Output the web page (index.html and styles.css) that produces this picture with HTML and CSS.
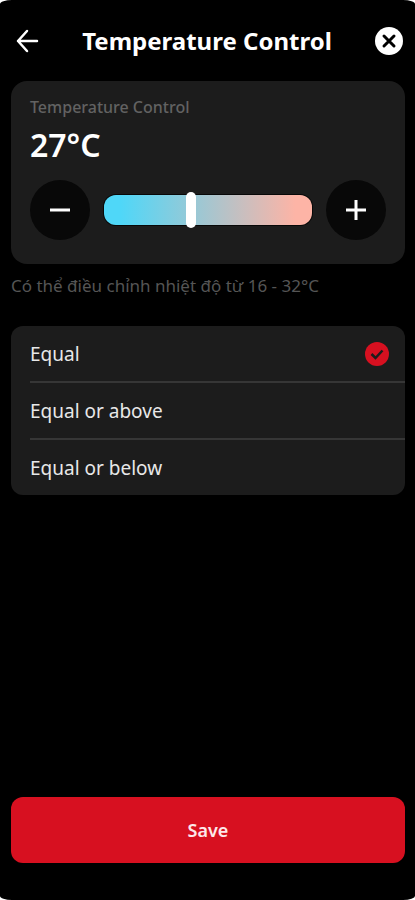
FILE: index.html
```html
<!DOCTYPE html>
<html lang="en">
    <head>
        <meta charset="utf-8">
        <meta name="viewport" content="width=device-width, initial-scale=1">
        <title>Temperature Control</title>
        <link rel="stylesheet" href="styles.css">
    </head>
    <body>
        <form class="screen">
            <header class="header">
                <button class="icon-btn" type="button" aria-label="Back">
                    <svg width="24" height="24" viewBox="0 0 24 24" fill="none" stroke="#fff" stroke-width="2.5" stroke-linecap="round" stroke-linejoin="round">
                        <path d="M22 12H3M12 2L3 12l9 10"/>
                    </svg>
                </button>
                <h1 class="title">Temperature Control</h1>
                <button class="icon-btn" type="button" aria-label="Close">
                    <svg width="28" height="28" viewBox="0 0 28 28">
                        <circle cx="14" cy="14" r="14" fill="#fff"/>
                        <path d="M9 9l10 10M19 9L9 19" stroke="#000" stroke-width="3" stroke-linecap="round"/>
                    </svg>
                </button>
            </header>
            <main class="content">
                <section class="card">
                    <label class="card-label" for="temp">Temperature Control</label>
                    <output class="value" for="temp">27°C</output>
                    <div class="controls">
                        <button class="round-btn" type="button" aria-label="Decrease">
                            <svg width="22" height="22" viewBox="0 0 22 22" stroke="#fff" stroke-width="3"><path d="M1 11h20"/></svg>
                        </button>
                        <input class="slider" id="temp" type="range" min="16" max="32" step="any" value="22.6">
                        <button class="round-btn" type="button" aria-label="Increase">
                            <svg width="22" height="22" viewBox="0 0 22 22" stroke="#fff" stroke-width="3"><path d="M1 11h20M11 1v20"/></svg>
                        </button>
                    </div>
                </section>
                <p class="hint" lang="vi">Có thể điều chỉnh nhiệt độ từ 16 - 32°C</p>
                <div class="options" role="radiogroup">
                    <label class="option">
                        <span>Equal</span>
                        <span class="mark">
                            <input type="radio" name="mode" checked>
                            <svg viewBox="0 0 24 24" fill="none" stroke="#1c1c1c" stroke-width="2.5"><path d="M6.500 12l4 4 7-7.500"/></svg>
                        </span>
                    </label>
                    <label class="option">
                        <span>Equal or above</span>
                        <span class="mark">
                            <input type="radio" name="mode">
                            <svg viewBox="0 0 24 24" fill="none" stroke="#1c1c1c" stroke-width="2.5"><path d="M6.500 12l4 4 7-7.500"/></svg>
                        </span>
                    </label>
                    <label class="option">
                        <span>Equal or below</span>
                        <span class="mark">
                            <input type="radio" name="mode">
                            <svg viewBox="0 0 24 24" fill="none" stroke="#1c1c1c" stroke-width="2.5"><path d="M6.500 12l4 4 7-7.500"/></svg>
                        </span>
                    </label>
                </div>
                <button class="save" type="submit">Save</button>
            </main>
        </form>
    </body>
</html>
```

FILE: styles.css
```css
*{
    box-sizing:border-box;
    margin:0;
    padding:0;
}
body{
    background:#fff;
    font-family:"Noto Sans","Open Sans",sans-serif;
    color:#fff;
}
button{
    border:0;
    background:none;
    font-family:inherit;
    color:inherit;
    cursor:pointer;
}
svg{
    display:block;
}
.screen{
    display:flex;
    flex-direction:column;
    min-height:100vh;
    background:#000;
    border-radius:12px / 4px;
}
.header{
    display:flex;
    align-items:center;
    justify-content:space-between;
    height:81px;
    padding:0 12px 0 15px;
}
.title{
    font-size:24px;
    line-height:32px;
    font-weight:700;
}
.content{
    flex:1;
    display:flex;
    flex-direction:column;
    padding:0 10px 37px 11px;
}

/* temperature card */
.card{
    display:flex;
    flex-direction:column;
    padding:14px 19px 24px;
    background:#1c1c1c;
    border-radius:16px;
}
.card-label{
    font-size:16px;
    line-height:24px;
    font-weight:500;
    color:#626262;
}
.value{
    margin:4px 0 13px;
    font-size:32px;
    line-height:44px;
    font-weight:600;
}
.controls{
    display:flex;
    align-items:center;
    gap:14px;
}
.round-btn{
    flex:none;
    display:flex;
    align-items:center;
    justify-content:center;
    width:60px;
    height:60px;
    border-radius:50%;
    background:#080808;
}
.slider{
    flex:1;
    min-width:0;
    height:36px;
    appearance:none;
    background:none;
}
.slider::-webkit-slider-runnable-track{
    height:30px;
    border-radius:12px;
    background:linear-gradient(90deg,#4fd7f8 8%,#fdb4a6 92%);
    box-shadow:0 0 0 1px #080808;
}
.slider::-webkit-slider-thumb{
    appearance:none;
    width:10px;
    height:36px;
    margin-top:-3px;
    border-radius:5px;
    background:#fff;
}
.hint{
    padding:10px 0 28px;
    font-size:17px;
    line-height:24px;
    color:#555;
}

/* comparison options */
.options{
    padding-left:19px;
    background:#1c1c1c;
    border-radius:12px;
}
.option{
    display:flex;
    align-items:center;
    justify-content:space-between;
    padding:16px 16px 15px 0;
    font-size:19px;
    line-height:24px;
    color:#e8e8e8;
}
.option + .option{
    border-top:2px solid #363636;
}
.mark{
    position:relative;
    width:24px;
    height:24px;
}
.mark input{
    display:block;
    width:24px;
    height:24px;
    appearance:none;
    border-radius:50%;
}
.mark input:checked{
    background:#d71020;
}
.mark svg{
    position:absolute;
    inset:0;
    visibility:hidden;
}
.mark input:checked + svg{
    visibility:visible;
}
.save{
    height:66px;
    margin-top:auto;
    border-radius:12px;
    background:#d71020;
    font-size:18px;
    line-height:24px;
    font-weight:600;
    color:#fde8ea;
}
```
